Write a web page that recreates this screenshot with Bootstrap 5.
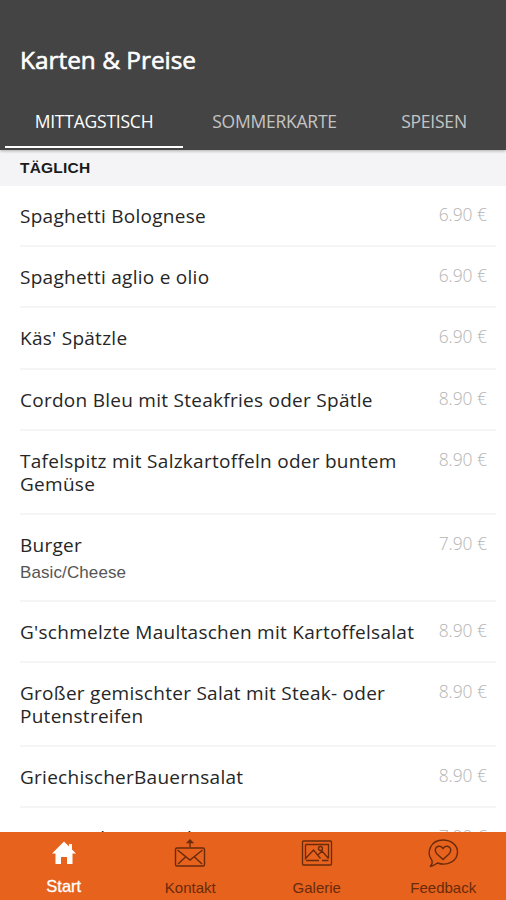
<!DOCTYPE html>
<html lang="de">
<head>
<meta charset="utf-8">
<meta name="viewport" content="width=device-width, initial-scale=1">
<title>Karten &amp; Preise</title>
<link href="https://cdn.jsdelivr.net/npm/bootstrap@5.3.0/dist/css/bootstrap.min.css" rel="stylesheet">
<style>
body{font-family:"Open Sans",sans-serif;color:#262626;height:900px}
.app-head{background:#444;height:150px;flex:none;box-shadow:0 1px 3px rgba(0,0,0,.3);z-index:1}
.app-title{font-size:24.4px;line-height:32px;font-weight:400;-webkit-text-stroke:.6px #fff;padding:44px 0 0 20px;height:93px}
.app-tabs{height:57px;padding-left:5px}
.app-tabs .nav-link{color:#c4c4c4;font-size:17.5px;letter-spacing:-.22px;line-height:24px;padding:16px 0 0;border-bottom:2px solid transparent;height:55px;text-align:center;width:178px}
.app-tabs .nav-link.active{color:#fff;border-color:#fff}
.app-tabs .nav-link:nth-child(2){width:183px}
.app-tabs .nav-link:last-child{width:136px}
.section-head{background:#f4f4f6;height:36px;flex:none;font:700 15.5px/35px "Liberation Sans",sans-serif;letter-spacing:.2px;padding-left:20px;color:#1b1b1b}
.menu-list{margin:0 10px 0 20px}
.menu-row{min-height:61.2px;padding:19px 9px 17px 0;border-bottom:2px solid #f5f5f5}
.dish{font-size:19px;line-height:23px;letter-spacing:.27px;white-space:nowrap}
.dish-note{font:17px/21px "Liberation Sans",sans-serif;letter-spacing:.1px;color:#555;margin-top:5px}
.price{font-size:17.4px;line-height:20px;color:#b4b4b4;font-weight:300;white-space:nowrap;margin-top:-1px}
.app-bar{background:#e7621c;height:68px;flex:none}
.app-bar a{color:#692b0c;font:15px/18px "Liberation Sans",sans-serif;width:25%;padding:5px 0 0 1px}
.app-bar a.active{color:#fff;font-size:16.5px;-webkit-text-stroke:.3px #fff}
.app-bar svg{width:34px;height:34px;margin-bottom:8px}
.app-bar a.active svg{margin-bottom:6px}
</style>
<script src="https://cdn.jsdelivr.net/npm/bootstrap@5.3.0/dist/js/bootstrap.bundle.min.js"></script>
</head>
<body class="d-flex flex-column overflow-hidden bg-white">
<header class="app-head">
<h1 class="app-title text-white m-0">Karten &amp; Preise</h1>
<nav class="nav app-tabs flex-nowrap">
<a class="nav-link active" href="#">MITTAGSTISCH</a><a class="nav-link" href="#">SOMMERKARTE</a><a class="nav-link" href="#">SPEISEN</a>
</nav>
</header>
<main class="flex-grow-1 overflow-hidden">
<h2 class="section-head m-0">TÄGLICH</h2>
<div class="menu-list">
<div class="menu-row d-flex justify-content-between"><div class="dish">Spaghetti Bolognese</div><div class="price">6.90 €</div></div>
<div class="menu-row d-flex justify-content-between"><div class="dish">Spaghetti aglio e olio</div><div class="price">6.90 €</div></div>
<div class="menu-row d-flex justify-content-between"><div class="dish">Käs' Spätzle</div><div class="price">6.90 €</div></div>
<div class="menu-row d-flex justify-content-between"><div class="dish">Cordon Bleu mit Steakfries oder Spätle</div><div class="price">8.90 €</div></div>
<div class="menu-row d-flex justify-content-between"><div class="dish">Tafelspitz mit Salzkartoffeln oder buntem<br>Gemüse</div><div class="price">8.90 €</div></div>
<div class="menu-row d-flex justify-content-between"><div><div class="dish">Burger</div><div class="dish-note">Basic/Cheese</div></div><div class="price">7.90 €</div></div>
<div class="menu-row d-flex justify-content-between"><div class="dish">G'schmelzte Maultaschen mit Kartoffelsalat</div><div class="price">8.90 €</div></div>
<div class="menu-row d-flex justify-content-between"><div class="dish">Großer gemischter Salat mit Steak- oder<br>Putenstreifen</div><div class="price">8.90 €</div></div>
<div class="menu-row d-flex justify-content-between"><div class="dish">GriechischerBauernsalat</div><div class="price">8.90 €</div></div>
<div class="menu-row d-flex justify-content-between"><div class="dish">Gemüse lasagne üb.</div><div class="price">7.90 €</div></div>
</div>
</main>
<nav class="app-bar d-flex">
<a class="active d-flex flex-column align-items-center text-decoration-none" href="#"><svg viewBox="0 0 34 34" fill="currentColor"><path d="M17 4.500 5 16.500h3.500V27H14v-7h6v7h5.500V16.500H29l-4-4V7h-3v2.500z"/></svg>Start</a>
<a class="d-flex flex-column align-items-center text-decoration-none" href="#"><svg viewBox="0 0 34 34" fill="none" stroke="currentColor" stroke-width="1.400"><rect x="2.500" y="11" width="29" height="18" rx="1.500"/><path d="m4.500 13 12.500 10 12.500-10M5 27l7.500-7M29 27l-7.500-7M17 10V4M14.500 5.500 17 3l2.500 2.500z"/></svg>Kontakt</a>
<a class="d-flex flex-column align-items-center text-decoration-none" href="#"><svg viewBox="0 0 34 34" fill="none" stroke="currentColor" stroke-width="1.300"><rect x="2.500" y="4" width="29" height="24" rx="1"/><path d="M5.500 7.500h23v14M5.500 7.500v14l8-8.500 7 8.500M18 18l4-4 6.500 7.500M6 23.500h13M22 23.500h6.500"/><circle cx="20.500" cy="11.500" r="2"/></svg>Galerie</a>
<a class="d-flex flex-column align-items-center text-decoration-none" href="#"><svg viewBox="0 0 34 34" fill="none" stroke="currentColor" stroke-width="1.400"><path d="M4 29.500c2-1.500 2.500-3 2-6C-.5 15 5 3 17 3c8 0 14.500 5 14.500 12 0 9-10 14.500-20 11-2 1.500-4.500 3-7.500 3.500zM17 22.500l-6-5.500c-5-5.500 2-11 6-5.500 4-5.500 11 0 6 5.500z"/></svg>Feedback</a>
</nav>
</body>
</html>
